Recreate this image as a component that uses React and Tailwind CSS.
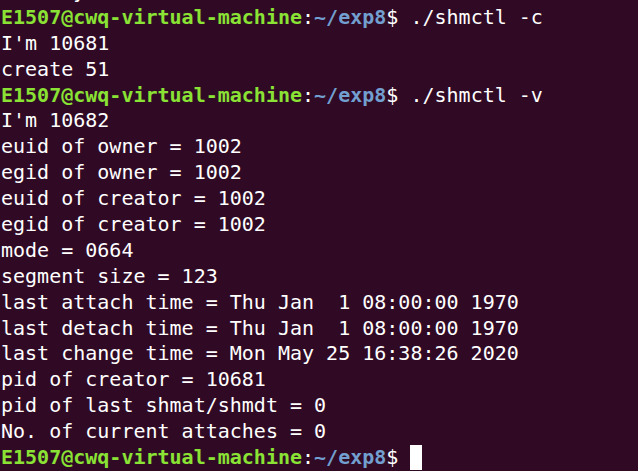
const lines = [
  { out: "      y    .............." },
  { cmd: "./shmctl -c" },
  { out: "I'm 10681" },
  { out: "create 51" },
  { cmd: "./shmctl -v" },
  { out: "I'm 10682" },
  { out: "euid of owner = 1002" },
  { out: "egid of owner = 1002" },
  { out: "euid of creator = 1002" },
  { out: "egid of creator = 1002" },
  { out: "mode = 0664" },
  { out: "segment size = 123" },
  { out: "last attach time = Thu Jan  1 08:00:00 1970" },
  { out: "last detach time = Thu Jan  1 08:00:00 1970" },
  { out: "last change time = Mon May 25 16:38:26 2020" },
  { out: "pid of creator = 10681" },
  { out: "pid of last shmat/shmdt = 0" },
  { out: "No. of current attaches = 0" },
  { cmd: "", cursor: true },
];

const Prompt = () => (
  <>
    <span className="font-bold text-[#8ae234]">E1507@cwq-virtual-machine</span>
    <span>:</span>
    <span className="font-bold text-[#729fcf]">~/exp8</span>
    <span>$ </span>
  </>
);

export default function App() {
  return (
    <div className="w-[638px] h-[471px] overflow-hidden bg-[#300a24] text-white">
      <div className="-mt-[21px] pl-[1px] font-['DejaVu_Sans_Mono',monospace] text-[20px] leading-[25.9px] whitespace-pre">
        {lines.map((l, i) => (
          <div key={i} className="h-[25.9px]">
            {l.cmd !== undefined ? (
              <>
                <Prompt />
                {l.cmd}
                {l.cursor && (
                  <span className="inline-block w-[12px] h-[25px] bg-white align-top"></span>
                )}
              </>
            ) : (
              l.out
            )}
          </div>
        ))}
      </div>
    </div>
  );
}
